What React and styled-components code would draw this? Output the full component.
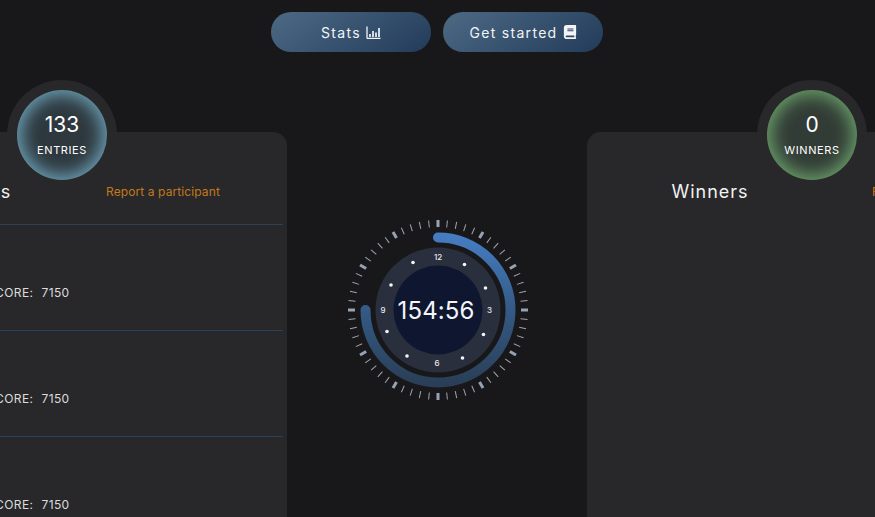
import React from "react";
import styled, { createGlobalStyle } from "styled-components";
import { FaBook } from "react-icons/fa";

const Global = createGlobalStyle`
  html, body { margin: 0; padding: 0; background: #18181a; }
  body { font-family: "Inter", "Noto Sans", sans-serif; color: #fff; }
`;

const Page = styled.div`
  width: 875px;
  height: 517px;
  box-sizing: border-box;
  padding-right: 1px;
  overflow: hidden;
  background: #18181a;
  display: flex;
  flex-direction: column;
  align-items: center;
`;

const TopBar = styled.nav`
  display: flex;
  gap: 12px;
  padding-top: 12px;
  flex: none;
`;

const PillButton = styled.button`
  width: 160px;
  height: 40px;
  border: 0;
  border-radius: 20px;
  background: linear-gradient(145deg, #4d6a85 0%, #223b5a 100%);
  color: #f2f4f6;
  font: 400 14px "Inter", sans-serif;
  letter-spacing: 1.3px;
  display: flex;
  align-items: center;
  justify-content: center;
  gap: 5px;
`;

const Columns = styled.main`
  margin-top: 80px;
  flex: none;
  display: grid;
  grid-template-columns: 466px 300px 466px;
  justify-content: center;
  width: 874px;
`;

const Card = styled.section`
  position: relative;
  height: 400px;
  background: #28282a;
  border-radius: 14px;
`;

const BadgeRing = styled.div`
  position: absolute;
  top: -52px;
  left: ${p => p.$left}px;
  width: 110px;
  height: 110px;
  border-radius: 50%;
  background: #28282a;
  display: flex;
  align-items: center;
  justify-content: center;
`;

const Badge = styled.div`
  width: 90px;
  height: 90px;
  padding-bottom: 2px;
  box-sizing: border-box;
  border-radius: 50%;
  background: ${p => p.$core};
  box-shadow: inset 0 0 18px 4px ${p => p.$glow};
  display: flex;
  flex-direction: column;
  align-items: center;
  justify-content: center;
  color: #fff;
`;

const BadgeValue = styled.div`
  font-size: 21px;
  line-height: 28px;
  font-weight: 400;
`;

const BadgeLabel = styled.div`
  font-size: 11px;
  line-height: 16px;
  letter-spacing: 0.6px;
  margin-top: 3px;
`;

const HeadRow = styled.header`
  display: grid;
  grid-template-columns: 285px auto;
  align-items: center;
  height: 92px;
  padding-top: 26px;
  box-sizing: border-box;
`;

const Title = styled.h2`
  margin: 0;
  padding-right: ${p => p.$inset}px;
  text-align: center;
  font-size: 18px;
  font-weight: 400;
  letter-spacing: 1px;
  color: #f2f2f2;
`;

const ReportLink = styled.a`
  font-size: 12px;
  letter-spacing: 0.1px;
  color: #c4781a;
  white-space: nowrap;
`;

const List = styled.ul`
  list-style: none;
  margin: 0 4px 0 0;
  padding: 0;
`;

const Row = styled.li`
  height: 106px;
  box-sizing: border-box;
  border-top: 1px solid #2c4258;
  padding: 59px 0 0 166px;
  font-size: 12px;
  line-height: 18px;
  color: #dcdcdc;
  letter-spacing: 0.4px;
  display: flex;
  gap: 8px;
`;

const ScoreValue = styled.span`
  font-weight: 400;
`;

const Middle = styled.div`
  display: flex;
  justify-content: center;
  padding: 84px 0 0 2px;
`;

const ClockWrap = styled.div`
  position: relative;
  width: 188px;
  height: 188px;
`;

const TimeText = styled.div`
  position: absolute;
  inset: 0;
  padding-right: 4px;
  display: flex;
  align-items: center;
  justify-content: center;
  font-size: 24px;
  letter-spacing: 0.1px;
  color: #f4f5f8;
`;

const cx = 94, cy = 94;
const dots = [[26.5, -45.5], [47.5, -22], [45.5, 24.5], [24.5, 48], [-31, 46], [-51, 21.5], [-47, -25], [-25, -47.5]];

function Clock() {
  const ticks = Array.from({ length: 60 }, (_, i) => i);
  return (
    <svg width="188" height="188" viewBox="0 0 188 188">
      <defs>
        <linearGradient id="arc" x1="0" y1="0" x2="0" y2="1">
          <stop offset="0" stopColor="#457cc0" />
          <stop offset="0.5" stopColor="#345a86" />
          <stop offset="1" stopColor="#2a3f57" />
        </linearGradient>
      </defs>
      {ticks.map(i => {
        const major = i % 5 === 0;
        return (
          <line
            key={i}
            x1={cx} y1={cy - 90} x2={cx} y2={cy - 83}
            stroke={major ? "#98a2b6" : "#a0a4ac"}
            strokeWidth={major ? 3 : 1}
            transform={`rotate(${i * 6} ${cx} ${cy})`}
          />
        );
      })}
      <path
        d={`M ${cx} ${cy - 72.5} A 72.5 72.5 0 1 1 ${cx - 72.5} ${cy}`}
        fill="none" stroke="url(#arc)" strokeWidth="10" strokeLinecap="round"
      />
      <circle cx={cx} cy={cy} r="62.5" fill="#2a2f3e" />
      <circle cx={cx} cy={cy} r="44.5" fill="#0f1730" />
      {dots.map(([x, y], i) => <circle key={i} cx={cx + x} cy={cy + y} r="1.8" fill="#f4f5f8" />)}
      <g fill="#e8e9ee" fontSize="8" fontFamily="Inter, sans-serif" fontWeight="500" textAnchor="middle">
        <text x={cx} y={cy - 50}>12</text>
        <text x={cx + 51.5} y={cy + 3}>3</text>
        <text x={cx - 1} y={cy + 56}>6</text>
        <text x={cx - 55} y={cy + 3}>9</text>
      </g>
    </svg>
  );
}

const ChartIcon = () => (
  <svg width="15" height="13" viewBox="0 0 15 13" fill="none" stroke="currentColor">
    <path d="M1 0.5 V11.5 a1 1 0 0 0 1 1 H14.5" strokeWidth="1.3" />
    <path d="M4 8v3M7 5v6M10 6.5v4.5M13 2v9" strokeWidth="1.7" />
  </svg>
);

const scores = [7150, 7150, 7150];

export default function App() {
  return (
    <Page>
      <Global />
      <TopBar>
        <PillButton>Stats <ChartIcon /></PillButton>
        <PillButton>Get started <FaBook size={14} /></PillButton>
      </TopBar>
      <Columns>
        <Card>
          <BadgeRing $left={186}>
            <Badge $core="#2e383e" $glow="#6fa6bc">
              <BadgeValue>133</BadgeValue>
              <BadgeLabel>ENTRIES</BadgeLabel>
            </Badge>
          </BadgeRing>
          <HeadRow>
            <Title $inset={17}>Participants</Title>
            <ReportLink>Report a participant</ReportLink>
          </HeadRow>
          <List>
            {scores.map((s, i) => (
              <Row key={i}><span>SCORE:</span><ScoreValue>{s}</ScoreValue></Row>
            ))}
          </List>
        </Card>
        <Middle>
          <ClockWrap>
            <Clock />
            <TimeText>154:56</TimeText>
          </ClockWrap>
        </Middle>
        <Card>
          <BadgeRing $left={170}>
            <Badge $core="#323c36" $glow="#6da56c">
              <BadgeValue>0</BadgeValue>
              <BadgeLabel>WINNERS</BadgeLabel>
            </Badge>
          </BadgeRing>
          <HeadRow>
            <Title $inset={39}>Winners</Title>
            <ReportLink>Report a participant</ReportLink>
          </HeadRow>
        </Card>
      </Columns>
    </Page>
  );
}
